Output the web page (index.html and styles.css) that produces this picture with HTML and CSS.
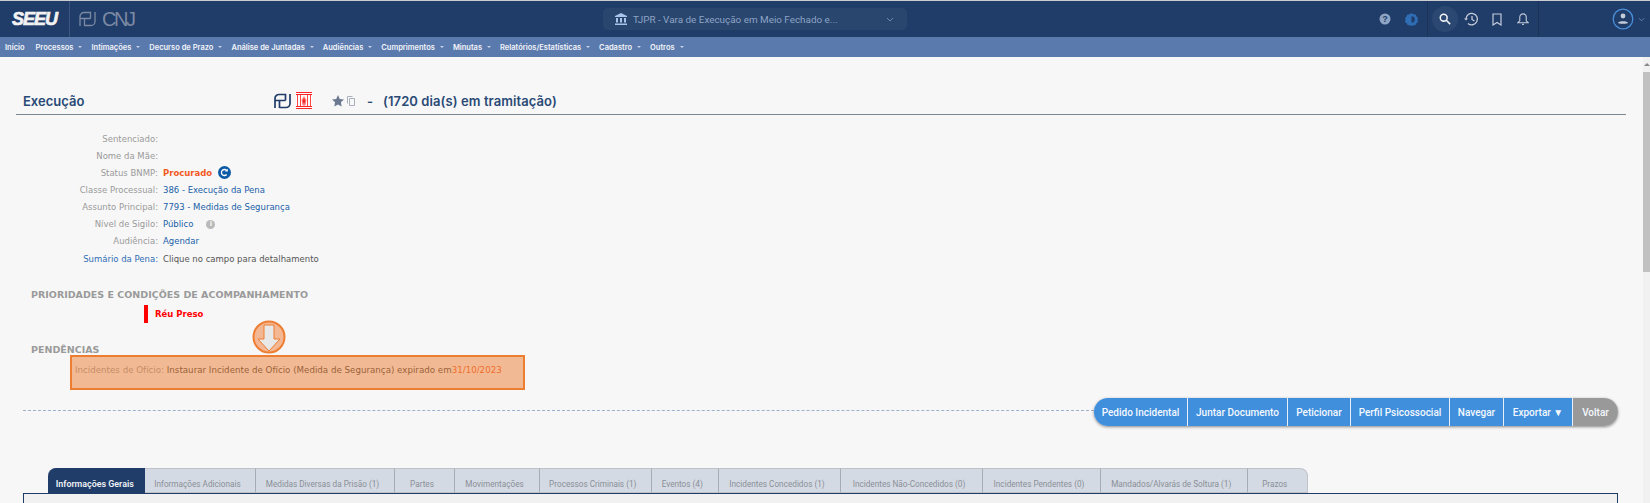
FILE: index.html
```html
<!DOCTYPE html>
<html lang="pt-BR">
<head>
  <meta charset="UTF-8">
  <title>SEEU - Execução</title>
  <link rel="stylesheet" href="styles.css">
</head>
<body>
  <!-- Top bar -->
  <header class="topbar">
    <div class="brand">
      <span class="seeu-logo">SEEU</span>
    </div>
    <div class="cnj">
      <svg class="cnj-icon" viewBox="0 0 17 16" fill="none" stroke="#7b8aa3" stroke-width="1.3"><path d="M11.500 7.500V1.500H5A4 4 0 0 0 1 5.500V15M1 7.500H11.500M5.500 15V7.500M5.500 14.500H12A4 4 0 0 0 16 10.500V1"/></svg>
      <span class="cnj-text">CNJ</span>
    </div>
    <div class="court-wrap">
      <div class="court-select">
        <svg class="court-icon" viewBox="0 0 12 12" fill="#a9c4ea"><path d="M6 0 12 3V4H0V3ZM1 5H3V9.500H1ZM5 5H7V9.500H5ZM9 5H11V9.500H9ZM0 10.500H12V12H0Z"/></svg>
        <span class="court-name">TJPR - Vara de Execução em Meio Fechado e...</span>
        <svg class="court-chevron" viewBox="0 0 8 5" fill="none" stroke="#6f88ad" stroke-width="1"><path d="M1 1 4 4 7 1"/></svg>
      </div>
    </div>
    <div class="top-tools">
      <span class="tool-icon"><svg viewBox="0 0 12 12" width="12" height="12"><circle cx="6" cy="6" r="5.500" fill="#8ea4c4"/><text x="6" y="9" text-anchor="middle" class="help-mark">?</text></svg></span>
      <span class="tool-icon"><svg viewBox="0 0 12 12" width="13" height="13"><path fill="#2f6db5" d="M6 0 7.700 1.200 9.800 1.300 10.700 3.200 12 4.800 11.500 6.800 12 8.300 10.400 9.500 9.500 11.200 7.500 11.200 6 12 4.500 11.200 2.500 11.200 1.600 9.500 0 8.300.5 6.800 0 4.800 1.300 3.200 2.200 1.300 4.300 1.200Z"/><path fill="#203c69" d="M6 3A3 3 0 0 1 6 9Z"/></svg></span>
    </div>
    <div class="main-tools">
      <span class="tool-btn active"><svg viewBox="0 0 14 14" width="12" height="12" fill="none" stroke="#f2f4f8" stroke-width="1.800"><circle cx="5.500" cy="5.500" r="4"/><path d="M8.500 8.500 13 13"/></svg></span>
      <span class="tool-btn"><svg viewBox="0 0 16 14" width="16" height="14" fill="none" stroke="#c3ccd9" stroke-width="1.300"><path d="M3 7A5.700 5.700 0 1 1 5 11.500"/><path d="M9 4V7.500L11.500 9"/><path d="M1 6.500H5L3 8.500Z" fill="#c3ccd9" stroke="none"/></svg></span>
      <span class="tool-btn"><svg viewBox="0 0 10 13" width="10" height="13" fill="none" stroke="#c3ccd9" stroke-width="1.200"><path d="M1 1H9V12L5 9.500 1 12Z"/></svg></span>
      <span class="tool-btn"><svg viewBox="0 0 13 14" width="12" height="14" fill="none" stroke="#c3ccd9" stroke-width="1.200"><path d="M6.500 1.500A3.500 3.500 0 0 0 3 5V9L1 11H12L10 9V5A3.500 3.500 0 0 0 6.500 1.500Z"/><path d="M5.500 12.800H7.500"/></svg></span>
    </div>
    <div class="user-menu">
      <svg viewBox="0 0 22 22" width="22" height="22" fill="none"><circle cx="11" cy="11" r="9.800" stroke="#4a90d9" stroke-width="1.300"/><circle cx="11" cy="8" r="2.400" fill="#c3ccd9"/><path d="M6 15C6 12.500 16 12.500 16 15 16 16 6 16 6 15Z" fill="#c3ccd9"/></svg>
      <svg class="user-chevron" viewBox="0 0 8 5" fill="none" stroke="#6f88ad" stroke-width="1"><path d="M1 1 4 4 7 1"/></svg>
    </div>
  </header>

  <!-- Main menu -->
  <nav class="menu">
    <a class="menu-plain">Início</a>
    <a>Processos</a>
    <a>Intimações</a>
    <a>Decurso de Prazo</a>
    <a>Análise de Juntadas</a>
    <a>Audiências</a>
    <a>Cumprimentos</a>
    <a>Minutas</a>
    <a>Relatórios/Estatísticas</a>
    <a>Cadastro</a>
    <a>Outros</a>
  </nav>

  <div class="page">
    <main class="content">
      <div class="title-row">
        <h1>Execução</h1>
        <svg class="badge-cnj" viewBox="0 0 17 16" fill="none" stroke="#203c69" stroke-width="1.700"><path d="M11.500 7.500V1.500H5A4 4 0 0 0 1 5.500V15M1 7.500H11.500M5.500 15V7.500M5.500 14.500H12A4 4 0 0 0 16 10.500V1"/></svg>
        <svg class="badge-jail" viewBox="0 0 16 17"><rect width="16" height="17" fill="#fff"/><path d="M0 .5H16M0 2.500H16M0 14.500H16M0 16.500H16" stroke="#f22" fill="none"/><path d="M1.500 3V14M14.500 3V14M4.500 3V14M11.500 3V14" stroke="#f44" fill="none"/><path d="M8 4 10.500 8 9.500 13.500H6.500L5.500 8Z" fill="#f77"/><path d="M8 6 9 9 8 12 7 9Z" fill="#e11"/></svg>
        <svg class="badge-star" viewBox="0 0 12 12" fill="#6c7a91"><path d="M6 0 7.800 4 12 4.500 8.900 7.300 9.700 11.500 6 9.400 2.300 11.500 3.100 7.300 0 4.500 4.200 4Z"/></svg>
        <svg class="badge-copy" viewBox="0 0 8 10" fill="none" stroke="#aab1bb" stroke-width="1"><path d="M2.500 2.500H7.500V9.500H2.500Z"/><path d="M.5 7.500V.5H5.500" /></svg>
        <span class="title-info">-</span>
        <span class="title-days">(1720 dia(s) em tramitação)</span>
      </div>

      <div class="details">
        <div class="row"><span class="label">Sentenciado:</span></div>
        <div class="row"><span class="label">Nome da Mãe:</span></div>
        <div class="row">
          <span class="label">Status BNMP:</span>
          <strong class="status">Procurado</strong>
          <svg class="refresh" viewBox="0 0 13 13"><circle cx="6.500" cy="6.500" r="6.500" fill="#0d5aa7"/><path d="M8.700 4.500A3 3 0 1 0 8.700 8.500" fill="none" stroke="#fff" stroke-width="1.300"/><path d="M9.800 2.800V5.600H7Z" fill="#fff"/></svg>
        </div>
        <div class="row"><span class="label">Classe Processual:</span><a class="value">386 - Execução da Pena</a></div>
        <div class="row"><span class="label">Assunto Principal:</span><a class="value">7793 - Medidas de Segurança</a></div>
        <div class="row">
          <span class="label">Nível de Sigilo:</span><a class="value">Público</a>
          <span class="info-dot">i</span>
        </div>
        <div class="row"><span class="label">Audiência:</span><a class="value">Agendar</a></div>
        <div class="row"><a class="label label-link">Sumário da Pena:</a><span class="value value-plain">Clique no campo para detalhamento</span></div>
      </div>

      <h2 class="section-title first">PRIORIDADES E CONDIÇÕES DE ACOMPANHAMENTO</h2>
      <div class="priority"><span class="priority-text">Réu Preso</span></div>

      <h2 class="section-title second">PENDÊNCIAS</h2>
      <div class="pending">
        <span class="pending-label">Incidentes de Ofício:</span>
        <span class="pending-text">Instaurar Incidente de Ofício (Medida de Segurança) expirado em</span><span class="pending-date">31/10/2023</span>
        <div class="mark-box"></div>
        <svg class="mark-arrow" viewBox="0 0 34 36">
          <circle cx="17" cy="18" r="15.500" fill="#f4b793" stroke="#ed7d31" stroke-width="2"/>
          <path d="M12 6H22V20H28L17 32 6 20H12Z" fill="#e8e8e8" stroke="#ed7d31" stroke-width="1"/>
        </svg>
      </div>

      <div class="action-row">
        <div class="dash-line"></div>
        <div class="actions">
          <button class="w1">Pedido Incidental</button>
          <button class="w2">Juntar Documento</button>
          <button class="w3">Peticionar</button>
          <button class="w4">Perfil Psicossocial</button>
          <button class="w5">Navegar</button>
          <button class="w6">Exportar ▼</button>
          <button class="w7 back">Voltar</button>
        </div>
      </div>

      <div class="tabs">
        <a class="tab active t1">Informações Gerais</a>
        <a class="tab t2">Informações Adicionais</a>
        <a class="tab t3">Medidas Diversas da Prisão (1)</a>
        <a class="tab t4">Partes</a>
        <a class="tab t5">Movimentações</a>
        <a class="tab t6">Processos Criminais (1)</a>
        <a class="tab t7">Eventos (4)</a>
        <a class="tab t8">Incidentes Concedidos (1)</a>
        <a class="tab t9">Incidentes Não-Concedidos (0)</a>
        <a class="tab t10">Incidentes Pendentes (0)</a>
        <a class="tab t11">Mandados/Alvarás de Soltura (1)</a>
        <a class="tab t12">Prazos</a>
      </div>
      <div class="tab-panel"></div>
    </main>
    <div class="scrollbar">
      <span class="scroll-up"></span>
      <span class="scroll-thumb"></span>
    </div>
  </div>
</body>
</html>
```

FILE: styles.css
```css
* {
  box-sizing: border-box;
}
html, body {
  height: 503px;
  overflow: hidden;
}
body {
  margin: 0;
  background-color: #f7f7f7;
  font-family: "DejaVu Sans", sans-serif;
}

/* Top bar */
.topbar {
  display: flex;
  align-items: stretch;
  height: 37px;
  background-color: #203c69;
  border-top: 1px solid #c9ccd1;
}
.brand {
  width: 70px;
  padding-left: 12px;
  border-right: 1px solid #3d5680;
  display: flex;
  align-items: center;
}
.seeu-logo {
  color: #f2f2f2;
  font-family: "Liberation Sans", sans-serif;
  font-size: 18px;
  font-weight: bold;
  font-style: italic;
  letter-spacing: -1px;
  -webkit-text-stroke: 0.7px #f2f2f2;
}
.cnj {
  width: 533px;
  padding-left: 9px;
  display: flex;
  align-items: center;
}
.cnj-icon {
  width: 17px;
  height: 16px;
}
.cnj-text {
  margin-left: 6px;
  color: #7b8aa3;
  font-family: "Liberation Sans", sans-serif;
  font-size: 20px;
  letter-spacing: -2.500px;
}
.court-wrap {
  width: 700px;
  display: flex;
  align-items: center;
}
.court-select {
  width: 304px;
  height: 22px;
  padding: 0 12px;
  display: flex;
  align-items: center;
  background-color: #29466f;
  border-radius: 5px;
}
.court-icon {
  width: 12px;
  height: 12px;
}
.court-name {
  margin-left: 6px;
  color: #8ea4c4;
  font-family: Roboto, sans-serif;
  font-size: 9.900px;
}
.court-chevron {
  width: 8px;
  height: 5px;
  margin-left: auto;
  margin-right: 1px;
}
.top-tools {
  width: 124px;
  padding-left: 76px;
  display: flex;
  align-items: center;
  gap: 14px;
}
.tool-icon {
  display: flex;
}
.help-mark {
  fill: #203c69;
  font-family: "Liberation Sans", sans-serif;
  font-size: 9px;
  font-weight: bold;
}
.main-tools {
  width: 112px;
  padding-left: 4px;
  display: flex;
  align-items: center;
  border-left: 1px solid #1b3359;
  border-right: 1px solid #1b3359;
}
.tool-btn {
  width: 26px;
  height: 26px;
  display: flex;
  align-items: center;
  justify-content: center;
}
.tool-btn.active {
  background-color: #2b4872;
  border-radius: 50%;
}
.user-menu {
  margin-left: 73px;
  display: flex;
  align-items: center;
  gap: 4px;
}
.user-chevron {
  width: 7px;
  height: 5px;
}

/* Main menu */
.menu {
  display: flex;
  align-items: center;
  height: 20px;
  padding-left: 5px;
  background-color: #5a7aae;
}
.menu a {
  display: flex;
  align-items: center;
  margin-right: 9px;
  color: #f2f4f8;
  font-family: Inter, sans-serif;
  font-size: 7.500px;
  font-weight: 600;
}
.menu a::after {
  content: "";
  margin-left: 5px;
  border-left: 2px solid transparent;
  border-right: 2px solid transparent;
  border-top: 2px solid #c3d0e4;
}
.menu a.menu-plain {
  margin-right: 11px;
}
.menu a.menu-plain::after {
  display: none;
}

/* Page body */
.page {
  display: flex;
  height: 446px;
}
.content {
  flex: 1;
  padding: 0 25px 0 16px;
  overflow: hidden;
}
.scrollbar {
  width: 7px;
  background-color: #f1f1f1;
}
.scroll-up {
  display: block;
  width: 0;
  margin: 6px auto 0;
  border-left: 3px solid transparent;
  border-right: 3px solid transparent;
  border-bottom: 3px solid #888;
}
.scroll-thumb {
  display: block;
  height: 200px;
  margin-top: 6px;
  background-color: #c1c1c1;
}

/* Title */
.title-row {
  display: flex;
  align-items: center;
  height: 31px;
  margin: 27px -8px 0 0;
  padding: 3px 0 0 7px;
  border-bottom: 1px solid #7d8791;
}
h1 {
  width: 251px;
  margin: 0;
  color: #2a4a76;
  font-family: Inter, sans-serif;
  font-size: 13px;
  font-weight: 600;
}
.badge-cnj {
  width: 17px;
  height: 16px;
}
.badge-jail {
  width: 16px;
  height: 17px;
  margin-left: 5px;
}
.badge-star {
  width: 12px;
  height: 12px;
  margin-left: 20px;
}
.badge-copy {
  width: 8px;
  height: 10px;
  margin-left: 3px;
}
.title-info {
  margin-left: 12px;
  color: #2a4a76;
  font-family: Inter, sans-serif;
  font-size: 13px;
  font-weight: 600;
}
.title-days {
  margin-left: 10px;
  color: #2a4a76;
  font-family: Inter, sans-serif;
  font-size: 13px;
  font-weight: 600;
  letter-spacing: 0.080px;
}

/* Process details */
.details {
  margin-top: 15px;
  font-size: 8.500px;
}
.row {
  display: flex;
  align-items: center;
  height: 17.150px;
}
.label {
  width: 142px;
  color: #9a9a9a;
  text-align: right;
}
.label-link {
  color: #2f6db5;
}
.value {
  margin-left: 5px;
  color: #1a5fa8;
}
.value-plain {
  color: #555;
}
.status {
  margin-left: 5px;
  color: #f25a1f;
}
.refresh {
  width: 13px;
  height: 13px;
  margin-left: 6px;
}
.info-dot {
  width: 9px;
  height: 9px;
  margin-left: 13px;
  border-radius: 50%;
  background-color: #b9b9b9;
  color: #f7f7f7;
  font-size: 7px;
  font-weight: bold;
  line-height: 9px;
  text-align: center;
}

/* Sections */
.section-title {
  margin: 0;
  padding-left: 15px;
  color: #9a9a9a;
  font-size: 9.500px;
  font-weight: bold;
}
.section-title.first {
  margin-top: 21.500px;
}
.section-title.second {
  margin-top: 21px;
}
.priority {
  height: 18px;
  margin: 5.500px 0 0 128px;
  padding-left: 7px;
  display: flex;
  align-items: center;
  border-left: 4px solid #f00;
}
.priority-text {
  color: #f00;
  font-size: 8.500px;
  font-weight: bold;
}

/* Pending row with the orange mark over it */
.pending {
  position: relative;
  height: 35px;
  margin: 0 0 0 54px;
  width: 455px;
  padding: 10px 0 0 5px;
  font-size: 8.700px;
}
.pending-label {
  color: #9a9a9a;
}
.pending-text {
  color: #444;
}
.pending-date {
  color: #f25a1f;
}
.mark-box {
  position: absolute;
  inset: 0;
  background-color: rgba(237, 125, 49, 0.5);
  border: 2px solid #ed7d31;
}
.mark-arrow {
  position: absolute;
  left: 182px;
  top: -36px;
  width: 34px;
  height: 36px;
}

/* Action buttons */
.action-row {
  display: flex;
  align-items: center;
  margin-top: 8px;
  padding-left: 7px;
}
.dash-line {
  flex: 1;
  margin-bottom: 4px;
  border-top: 1px dashed #9fb0cc;
}
.actions {
  display: flex;
  height: 28px;
  border-radius: 14px;
  box-shadow: 0 1px 3px rgba(0, 0, 0, 0.45);
  overflow: hidden;
}
.actions button {
  padding: 0;
  border: none;
  border-right: 1px solid #e8eef7;
  background-color: #3f8fdd;
  color: #f4f8fd;
  font-family: Roboto, sans-serif;
  font-size: 10px;
  font-weight: 500;
}
.actions button.back {
  border-right: none;
  background-color: #999;
}
.w1 { width: 94px; }
.w2 { width: 100px; }
.w3 { width: 63px; }
.w4 { width: 99px; }
.w5 { width: 54px; }
.w6 { width: 69px; }
.w7 { width: 45px; }

/* Tabs */
.tabs {
  display: flex;
  height: 25px;
  margin: 42px 0 0 31.500px;
}
.tab {
  display: flex;
  align-items: center;
  justify-content: center;
  padding: 6px 5px 0 0;
  background-color: #d4dae3;
  border-top: 1px solid #bfc3c9;
  border-right: 1px solid #a9adb3;
  border-bottom: 1px solid #bfc3c9;
  color: #8a8f98;
  font-family: Roboto, sans-serif;
  font-size: 8.200px;
}
.tab.active {
  padding-right: 2px;
  background-color: #203c69;
  border-color: #203c69;
  border-top-left-radius: 8px;
  color: #eef1f6;
  font-size: 8.900px;
  font-weight: 600;
}
.t12 {
  border-top-right-radius: 8px;
  border-right-color: #bfc3c9;
}
.t1 { width: 97.500px; }
.t2 { width: 111px; }
.t3 { width: 139px; }
.t4 { width: 60px; }
.t5 { width: 85px; }
.t6 { width: 111.500px; }
.t7 { width: 67.500px; }
.t8 { width: 122px; }
.t9 { width: 142px; }
.t10 { width: 118px; }
.t11 { width: 146.500px; }
.t12 { width: 60.500px; }
.tab-panel {
  height: 40px;
  margin-left: 7px;
  background-color: #f1f1f1;
  border: 1px solid #203c69;
}
```
